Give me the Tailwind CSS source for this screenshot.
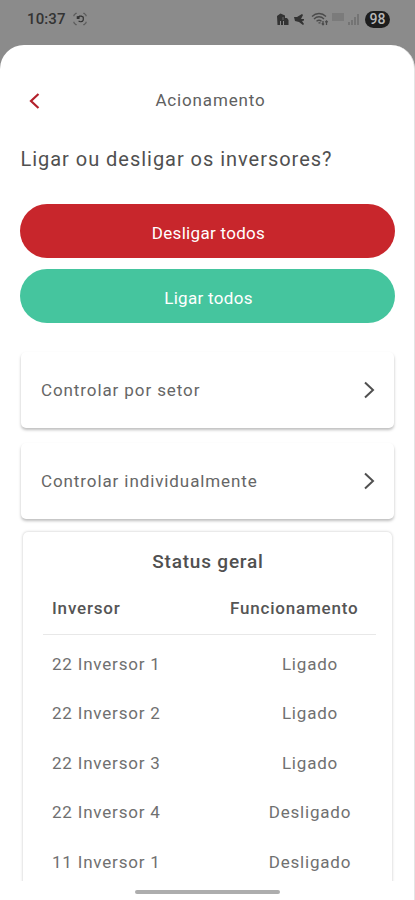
<!DOCTYPE html>
<html lang="pt-BR">
<head>
  <meta charset="UTF-8" />
  <meta name="viewport" content="width=device-width, initial-scale=1.0" />
  <title>Acionamento</title>
  <script src="https://cdn.jsdelivr.net/npm/@tailwindcss/browser@4"></script>
  <style>
    body { font-family: Roboto, sans-serif; }
  </style>
</head>
<body class="bg-[#8b8b8b] w-[415px] h-[900px] overflow-hidden text-[#666]">

  <!-- Status bar -->
  <header class="h-[45px] flex items-start justify-between pl-[27px] pr-[25px] pt-[10px] text-[#333]">
    <div class="flex items-center gap-[7px] h-[18px]">
      <span class="text-[15px] leading-[18px] font-medium tracking-[0.1px]">10:37</span>
      <svg class="w-[14px] h-[14px]" viewBox="0 0 15 14" fill="none" stroke="#5c5c5c" stroke-width="1.3">
        <path d="M1 4V3l2-2h1M11 1h1l2 2v1M14 10v1l-2 2h-1M4 13H3l-2-2v-1" />
        <path d="M5 5h1l1-1h2l2 1v3a3 3 0 0 1-5 1" stroke="#333" />
        <path d="M4 4h3v3H4z" fill="#333" stroke="none" />
      </svg>
    </div>
    <div class="flex items-center h-[18px]">
      <svg class="w-[12px] h-[13px]" viewBox="0 0 12 13" fill="#333">
        <path d="M0 3l3.500-2.500L8 2.500V5h2l1.500 2v5H7V8H6v4H4V8H3v4H.5z" />
        <path d="M6 4v3" stroke="#777" stroke-width=".8" />
      </svg>
      <svg class="w-[12px] h-[13px] ml-[5px]" viewBox="0 0 12 13" fill="#333">
        <path d="M0 4h3l5-3 1 1-2 4h3v1.500L8 8l2 3-1 1-4-3-4-1z" />
      </svg>
      <svg class="w-[18px] h-[14px] ml-[5px]" viewBox="0 0 18 14" fill="none" stroke="#4a4a4a" stroke-width="1.3">
        <path d="M1 4.500c4-4 10-4 14 0M3 7c3-3 7-3 10 0M5.500 9.300c1.500-1.300 3.500-1.300 5 0" />
        <path d="M7.500 10.800h2M12 9v3.500M10.800 11.300L12 12.700l1-1.200M15.500 13V9M14.300 10.300L15.500 9l1.200 1.300" />
      </svg>
      <span class="w-[12px] h-[8px] bg-[#7b7b7b] ml-[3px] mb-[5px]"></span>
      <svg class="w-[11px] h-[12px] ml-[4px]" viewBox="0 0 11 12" fill="#747474">
        <path d="M0 9h2v3H0zM3 7h2v5H3zM6 4h2v8H6zM9 1h2v11H9z" />
      </svg>
      <span class="w-[25px] h-[17px] ml-[6px] rounded-full bg-[#1d1d1d] text-[#b8b8b8] text-[14px] leading-[17px] font-medium text-center">98</span>
    </div>
  </header>

  <main class="h-[855px] bg-white rounded-t-[24px] border-r border-[#e4e4e4] pl-[20px] pr-[19px] flex flex-col">
    <!-- Title -->
    <div class="h-[24px] mt-[43px] grid grid-cols-[30px_1fr_30px] items-center shrink-0">
      <svg class="w-[12px] h-[18px] ml-[8px] mt-[2px]" viewBox="0 0 12 18" fill="none" stroke="#b3202a" stroke-width="2.2">
        <path d="M10.500 2L3 9l7.500 7" />
      </svg>
      <h1 class="text-center text-[17px] tracking-[0.85px] leading-[24px] pl-[6px] text-[#606060]">Acionamento</h1>
    </div>
    <h2 class="mt-[34px] text-[20px] leading-[26px] tracking-[0.97px] pl-[0.5px] text-[#505050] whitespace-nowrap shrink-0">Ligar ou desligar os inversores?</h2>

    <!-- Actions -->
    <div class="mt-[32px] flex flex-col gap-[11px] shrink-0">
      <button class="h-[54px] rounded-full bg-[#c8262c] text-white text-[17px] tracking-[0.3px] pt-[5px] pl-[2px]">Desligar todos</button>
      <button class="h-[54px] rounded-full bg-[#45c59e] text-white text-[17px] tracking-[0.3px] pt-[5px] pl-[2px]">Ligar todos</button>
    </div>

    <div class="mt-[29px] mx-px flex flex-col gap-[15px] shrink-0">
      <a class="h-[76px] rounded-[5px] bg-white shadow-[0_2px_3px_rgba(0,0,0,0.26)] flex items-center justify-between pl-[20px] pr-[19px]">
        <span class="text-[17px] tracking-[0.9px] pt-px">Controlar por setor</span>
        <svg class="w-[12px] h-[18px]" viewBox="0 0 12 18" fill="none" stroke="#505050" stroke-width="2">
          <path d="M2 1.500L10 9l-8 7.500" />
        </svg>
      </a>
      <a class="h-[76px] rounded-[5px] bg-white shadow-[0_2px_3px_rgba(0,0,0,0.26)] flex items-center justify-between pl-[20px] pr-[19px]">
        <span class="text-[17px] tracking-[0.9px] pt-px">Controlar individualmente</span>
        <svg class="w-[12px] h-[18px]" viewBox="0 0 12 18" fill="none" stroke="#505050" stroke-width="2">
          <path d="M2 1.500L10 9l-8 7.500" />
        </svg>
      </a>
    </div>

    <!-- Status table, cut off by the bottom of the screen -->
    <div class="mt-[5px] -mx-1 px-[7px] pt-[8px] h-[357px] overflow-hidden shrink-0">
      <section class="h-[400px] rounded-[5px] bg-white shadow-[0_0_3px_rgba(0,0,0,0.24)] pl-[20px] pr-[16px] pt-[17px]">
        <h3 class="text-center text-[19px] leading-[26px] font-medium tracking-[0.8px] pr-[3px] text-[#505050]">Status geral</h3>
        <div class="mt-[14px] h-[46px] pt-[7px] pl-[9px] border-b border-[#e8e8e8] grid grid-cols-[178px_1fr] text-[17px] leading-[24px] font-medium tracking-[0.8px] text-[#555]">
          <span>Inversor</span>
          <span>Funcionamento</span>
        </div>
        <ul class="pt-[4.5px] text-[17px] leading-[49.5px] tracking-[0.8px] text-[#707070]">
          <li class="grid grid-cols-[192px_1fr] pl-[9px] h-[49.5px]"><span>22 Inversor 1</span><span class="text-center">Ligado</span></li>
          <li class="grid grid-cols-[192px_1fr] pl-[9px] h-[49.5px]"><span>22 Inversor 2</span><span class="text-center">Ligado</span></li>
          <li class="grid grid-cols-[192px_1fr] pl-[9px] h-[49.5px]"><span>22 Inversor 3</span><span class="text-center">Ligado</span></li>
          <li class="grid grid-cols-[192px_1fr] pl-[9px] h-[49.5px]"><span>22 Inversor 4</span><span class="text-center">Desligado</span></li>
          <li class="grid grid-cols-[192px_1fr] pl-[9px] h-[49.5px]"><span>11 Inversor 1</span><span class="text-center">Desligado</span></li>
        </ul>
      </section>
    </div>

    <!-- Home indicator -->
    <div class="mt-[9px] w-[145px] h-[4px] ml-[115px] rounded-full bg-[#adadad] shrink-0"></div>
  </main>

</body>
</html>
